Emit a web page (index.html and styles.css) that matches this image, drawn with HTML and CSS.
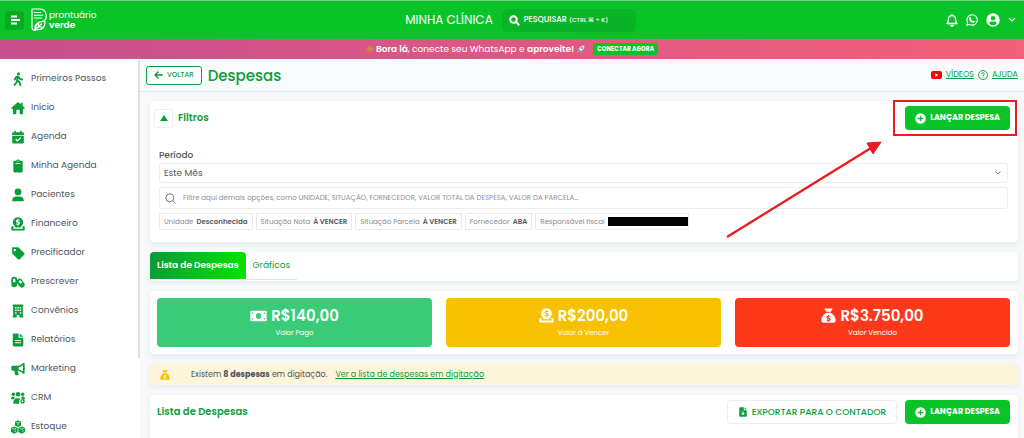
FILE: index.html
```html
<!DOCTYPE html>
<html lang="pt-BR">
<head>
<meta charset="UTF-8">
<meta name="viewport" content="width=device-width, initial-scale=1">
<title>Despesas - Prontuário Verde</title>
<link rel="stylesheet" href="styles.css">
</head>
<body>
<!-- Ícones -->
<svg class="sprite" aria-hidden="true">
  <symbol id="i-walk" viewBox="0 0 24 24"><circle cx="13" cy="3" r="2.6"/><path d="M12.500 8 10.500 14l4 3 1.500 5.500M10.500 14.500 9.500 18 6 22M12 7.500 8 9.500 6.500 13M13 8l2 3.500 4 1.500" fill="none" stroke="currentColor" stroke-width="3.200" stroke-linecap="round" stroke-linejoin="round"/></symbol>
  <symbol id="i-home" viewBox="0 0 24 24"><path d="M12 1.500 0.600 11.500c-.8.8-.3 1.800.7 1.800h2V21c0 1 .6 1.600 1.600 1.600h4.200V16.500c0-.8.5-1.300 1.300-1.300h3.200c.8 0 1.300.5 1.300 1.300v6.100h4.200c1 0 1.600-.6 1.600-1.600v-7.700h2c1 0 1.500-1 .7-1.800L20 8.300V3h-3v2.700z"/></symbol>
  <symbol id="i-calendar" viewBox="0 0 24 24"><path d="M7 1c.8 0 1.300.5 1.300 1.300V4h7.400V2.300a1.300 1.300 0 0 1 2.600 0V4H20c1.200 0 2 .8 2 2v2.500H2V6c0-1.200.8-2 2-2h1.700V2.300C5.700 1.500 6.200 1 7 1zM2 10h20v11c0 1.200-.8 2-2 2H4c-1.200 0-2-.8-2-2zm14 2.300-5 5-2.300-2.300-1.500 1.500 3.800 3.800 6.500-6.500z"/></symbol>
  <symbol id="i-clipboard" viewBox="0 0 24 24"><path fill-rule="evenodd" d="M12 .8A3.200 3.200 0 0 1 15 3h3c1.200 0 2 .8 2 2v16c0 1.200-.8 2-2 2H6c-1.200 0-2-.8-2-2V5c0-1.200.8-2 2-2h3A3.200 3.200 0 0 1 12 .8zM12 3a1 1 0 1 0 0 2 1 1 0 0 0 0-2zM8 7v1.500h8V7z"/></symbol>
  <symbol id="i-user" viewBox="0 0 24 24"><circle cx="12" cy="6.800" r="5.800"/><path d="M2 22.700c-.2-5 2.500-8.200 7-8.200h6c4.500 0 7.200 3.200 7 8.200z"/></symbol>
  <symbol id="i-deposit" viewBox="0 0 24 24"><path d="M3.500 16H2c-1 0-1.600.7-1.600 1.600v3.800c0 1 .7 1.600 1.600 1.600h20c1 0 1.600-.7 1.600-1.600v-3.800c0-1-.7-1.600-1.600-1.600h-1.500l-2 2h1.700v2H3.800v-2h1.700z"/><path fill-rule="evenodd" d="M12 .5a8.700 8.700 0 0 1 6.300 14.700L16 18H8l-2.300-2.800A8.700 8.700 0 0 1 12 .5zM11.200 3v1.300C7.500 5 8.200 9 11 9.700c2.300.6 2.300 1.800.8 1.800-1 0-1.700-.3-2.500-.8l-.8 1.700c.8.5 1.700.8 2.700.9V15h1.700v-1.700c3.500-.7 3.400-4.600.3-5.400-2.400-.6-2.300-1.700-1-1.700.8 0 1.500.2 2.200.5l.7-1.600c-.6-.4-1.400-.6-2.200-.7V3z"/></symbol>
  <symbol id="i-tag" viewBox="0 0 24 24"><path fill-rule="evenodd" d="M2 2h9.500c.8 0 1.500.3 2 .8l9 9c1 1 1 2.300 0 3.300l-7.400 7.400c-1 1-2.300 1-3.300 0l-9-9c-.5-.5-.8-1.200-.8-2zm4.500 3a2 2 0 1 0 0 4 2 2 0 0 0 0-4z"/></symbol>
  <symbol id="i-pills" viewBox="0 0 24 24"><path fill-rule="evenodd" d="M5.500 3a5 5 0 0 1 5 5v.5l.8-.9a5 5 0 0 1 7.400.8l4 5.600a5 5 0 0 1-8.100 5.800l-4.100-5.700V16a5 5 0 0 1-10 0V8a5 5 0 0 1 5-5zm-2 5v4.500h4V8a2 2 0 0 0-4 0zm10.200 4.200 2.300 3.100 3.400-2.400-2.400-3.200a2.100 2.100 0 0 0-3.300 2.500z"/></symbol>
  <symbol id="i-building" viewBox="0 0 24 24"><path fill-rule="evenodd" d="M4 1h16c.8 0 1.200.5 1.200 1.200v1c0 .5-.4.800-.9.800v17h.9v2h-7v-4H9.800v4h-7v-2h.9V4c-.5 0-.9-.3-.9-.8v-1C2.800 1.500 3.200 1 4 1zm3 4v2.500h2.500V5zm4 0v2.500h2.500V5zm4 0v2.500h2.500V5zM7 9.500V12h2.500V9.500zm4 0V12h2.500V9.500zm4 0V12h2.500V9.500zM7 14v2.500h2.500V14zm8 0v2.500h2.500V14z"/></symbol>
  <symbol id="i-file" viewBox="0 0 24 24"><path fill-rule="evenodd" d="M5 1h8v7h8v13c0 1.200-.8 2-2 2H5c-1.200 0-2-.8-2-2V3c0-1.200.8-2 2-2zm10 0 6 5.500h-6zM7 12v1.600h10V12zm0 4v1.600h10V16z"/></symbol>
  <symbol id="i-horn" viewBox="0 0 24 24"><path fill-rule="evenodd" d="M22 1.500c.8 0 1.300.6 1.300 1.400v6c1.100.6 1.100 3 0 3.700V19c0 1.100-1.200 1.700-2.100 1l-3.200-2.500c-2-1.500-4-2.300-6.500-2.500-.2 2.200.2 3.700 1.500 5.300.8 1 .1 2.400-1.100 2.400H8.500c-.5 0-1-.3-1.200-.8C6.200 19.800 5.800 17.500 6 15H3c-1.400 0-2.400-1-2.400-2.400V9C.6 7.600 1.600 6.500 3 6.500h7.500c3 0 5.400-1 7.500-2.600l3.200-2zM20.500 5.700c-2.200 1.700-4.600 2.800-7.500 3.200v3.800c2.900.4 5.300 1.400 7.500 3.200z"/></symbol>
  <symbol id="i-crm" viewBox="0 0 24 24"><circle cx="4" cy="5.500" r="2.900"/><circle cx="12" cy="5.500" r="3.900"/><circle cx="20" cy="5.500" r="2.900"/><path d="M0 14c0-3 1.300-4.700 3.500-4.700 1.500 0 2.500.4 3.200 1.500L5 14zM17.300 11c.7-1.100 1.700-1.700 3.200-1.700 2.200 0 3.500 1.700 3.500 4.700h-5zM4 22c-.2-5 1.500-9.500 6-9.500h3c1.500 0 2.500.3 3.300 1.200-2.500 1.800-3.500 5-1.800 8.300z"/><path fill-rule="evenodd" d="m18.500 13.500.5 1.300 1.300-.2 1.100-1 1.300.8-.2 1.400.8 1h1v1.700h-1l-.7 1.200.3 1.400-1.400.8-1-1h-1.400l-1 1-1.400-.8.3-1.400-.7-1.200h-1v-1.700h1l.8-1-.3-1.400zM19.500 16a1.600 1.600 0 1 0 0 3.200 1.600 1.600 0 0 0 0-3.200z"/></symbol>
  <symbol id="i-boxes" viewBox="0 0 24 24"><path d="M12 .5 17.200 3v6.500L12 12 6.800 9.500V3zM5.700 11l5.700 2.500v7.200l-5.700 2.800L0 20.700v-7.200zM18.300 11l5.700 2.500v7.200l-5.700 2.800-5.700-2.800v-7.200z"/><path d="m9 4 3 1.500L15 4M12 9V7M2.700 14.500l3 1.500 3-1.500M7.500 20.500v-2.500M15.300 14.500l3 1.500 3-1.500M20.500 20v-2" fill="none" stroke="#fff" stroke-width="1.300"/></symbol>
  <symbol id="i-plus" viewBox="0 0 24 24"><path fill-rule="evenodd" d="M12 .5a11.500 11.500 0 1 0 0 23 11.500 11.500 0 0 0 0-23zM10.500 6h3v4.500H18v3h-4.500V18h-3v-4.500H6v-3h4.500z"/></symbol>
  <symbol id="i-bag" viewBox="0 0 24 24"><path fill-rule="evenodd" d="M6.500.6h11c.8 0 1.100.7.700 1.300L15.500 6h-7L5.800 1.900C5.400 1.300 5.700.6 6.500.6zM8.500 7.500h7C20 10 23.500 15 23.500 19c0 3-1.500 4.500-4.500 4.500H5C2 23.500.5 22 .5 19 .5 15 4 10 8.500 7.500zM11.200 11v1.200c-3.600.6-3.300 4.200-.4 5 2.300.6 2.100 1.600.9 1.600-.9 0-1.600-.3-2.300-.7l-.8 1.600c.7.5 1.600.8 2.600.9V22h1.600v-1.400c3.400-.6 3.500-4.400.3-5.200-2.200-.6-2-1.500-.9-1.500.7 0 1.400.2 2 .5l.7-1.500c-.6-.4-1.300-.6-2.100-.7V11z"/></symbol>
  <symbol id="i-money" viewBox="0 0 26 18"><path fill-rule="evenodd" d="M2 1h22c.8 0 1.500.7 1.500 1.500v13c0 .8-.7 1.500-1.500 1.500H2C1.200 17 .5 16.300.5 15.500v-13C.5 1.700 1.200 1 2 1zm11 3.500a4 4.500 0 1 0 0 9 4 4.500 0 0 0 0-9zM3 3.500v2.300A2.300 2.300 0 0 0 5.300 3.500zm20 0h-2.300A2.300 2.300 0 0 0 23 5.800zm-20 8.700v2.300h2.300A2.300 2.300 0 0 0 3 12.200zm20 0a2.300 2.300 0 0 0-2.300 2.300H23z"/></symbol>
  <symbol id="i-export" viewBox="0 0 24 24"><path fill-rule="evenodd" d="M5 .5h9v7h7V21.500c0 1.200-.8 2-2 2H5c-1.200 0-2-.8-2-2v-19c0-1.200.8-2 2-2zm11 0 5 5h-5zM10.800 10v5H7.500l4.500 5 4.500-5h-3.300v-5z"/></symbol>
</svg>

<header class="topbar">
  <div class="topbar-left">
    <button class="menu-btn" type="button" aria-label="Menu">
      <svg width="10" height="10" viewBox="0 0 10 10"><path d="M1 1.500h6M1 5h9M1 8.500h6" stroke="currentColor" stroke-width="2"/></svg>
    </button>
    <a class="logo" href="#">
      <svg width="16" height="24" viewBox="0 0 16 24" fill="none" stroke="currentColor" stroke-width="1.200" stroke-linecap="round" stroke-linejoin="round">
        <path d="M1 1h7.500c8 0 8.500 10 3.500 12.500C5 14.500 3 17.500 4.200 22.500M1 1v18c0 2 1.500 3.500 3.200 3.500M3.500 4.500h6M3.500 7.300h8M3.500 10h7M4.500 21.500c6 1 9.500-1.500 9.500-8-6-.5-9 1.500-9.500 8zM4.500 21.500l6-5.500M7.500 15.500v3.500h3.500"/>
      </svg>
      <span class="logo-text"><span>prontuário</span><b>verde</b></span>
    </a>
  </div>
  <div class="topbar-center">
    <span class="clinic">MINHA CLÍNICA</span>
    <button class="search-btn" type="button">
      <svg width="11" height="11" viewBox="0 0 11 11" fill="none" stroke="currentColor" stroke-width="2"><circle cx="4.500" cy="4.500" r="3.300"/><path d="m7 7 3.300 3.300"/></svg>
      <span>PESQUISAR <small>(CTRL ⌘ + K)</small></span>
    </button>
  </div>
  <div class="topbar-right">
    <button type="button" aria-label="Notificações">
      <svg width="12" height="14" viewBox="0 0 12 14" fill="none" stroke="currentColor" stroke-width="1.300" stroke-linejoin="round"><path d="M6 1v1M1 10.500c1.500-1.500 1.500-2.500 1.500-4.500a3.500 3.500 0 0 1 7 0c0 2 0 3 1.500 4.500z"/><path d="M4.500 12.300c.6 1.200 2.400 1.200 3 0z" fill="currentColor"/></svg>
    </button>
    <button type="button" aria-label="WhatsApp">
      <svg width="12" height="12" viewBox="0 0 24 24"><path fill="none" stroke="currentColor" stroke-width="2.200" d="M1.700 22.300 3.300 17A10.300 10.300 0 1 1 7 20.800z"/><path fill="currentColor" d="M8.300 6c.6-.2 1 0 1.200.5l.9 2c.2.500-.2 1-.9 1.800 1 2 2.300 3.200 4.400 4.100.6-.8 1-1.400 1.500-1.200l2.100 1c.5.3.4.7.2 1.400-.6 1.500-2.200 2.200-3.800 1.800-4-1-6.700-3.700-7.800-6.900-.4-1.800.6-4 2.200-4.500z"/></svg>
    </button>
    <button class="account" type="button" aria-label="Minha conta">
      <svg width="14" height="14" viewBox="0 0 24 24"><path fill="currentColor" fill-rule="evenodd" d="M12 .5a11.500 11.500 0 1 0 0 23 11.500 11.500 0 0 0 0-23zM12 5a4 4 0 1 1 0 8 4 4 0 0 1 0-8zM5.500 18c.5-2.500 2-3.500 4-3.500h5c2 0 3.500 1 4 3.500-3 3.500-10 3.500-13 0z"/></svg>
      <svg width="8" height="6" viewBox="0 0 8 6" fill="none" stroke="currentColor" stroke-width="1.200"><path d="m1 1 3 3 3-3"/></svg>
    </button>
  </div>
</header>

<div class="promo">
  <span class="promo-text">
    <svg width="8" height="8" viewBox="0 0 8 8" stroke="#c98a4b" stroke-width="1"><path d="M4 0v8M0 4h8M1 1l6 6M7 1 1 7"/><circle cx="4" cy="4" r="2" fill="#c98a4b"/></svg>
    <span><b>Bora lá</b>, conecte seu WhatsApp e <b>aproveite!</b></span>
    <svg width="9" height="9" viewBox="0 0 9 9"><path d="M8.500.5C6 .5 4 1.500 2.800 4L5 6.200C7.500 5 8.500 3 8.500.5z" fill="#dfe7f2"/><circle cx="6" cy="3" r="1" fill="#4b86c9"/><path d="M3.300 3 1 3.500.5 5l2-.3zM6 5.700 5.500 8 4 8.500l.3-2z" fill="#8299c4"/><path d="M2.500 5.500.8 8.200 3.500 6.500z" fill="#f2a541"/></svg>
  </span>
  <button class="promo-btn" type="button">CONECTAR AGORA</button>
</div>

<div class="layout">
  <nav class="sidebar">
    <a href="#"><svg><use href="#i-walk"/></svg>Primeiros Passos</a>
    <a href="#"><svg><use href="#i-home"/></svg>Início</a>
    <a href="#"><svg><use href="#i-calendar"/></svg>Agenda</a>
    <a href="#"><svg><use href="#i-clipboard"/></svg>Minha Agenda</a>
    <a href="#"><svg><use href="#i-user"/></svg>Pacientes</a>
    <a href="#"><svg><use href="#i-deposit"/></svg>Financeiro</a>
    <a href="#"><svg><use href="#i-tag"/></svg>Precificador</a>
    <a href="#"><svg><use href="#i-pills"/></svg>Prescrever</a>
    <a href="#"><svg><use href="#i-building"/></svg>Convênios</a>
    <a href="#"><svg><use href="#i-file"/></svg>Relatórios</a>
    <a href="#"><svg><use href="#i-horn"/></svg>Marketing</a>
    <a href="#"><svg><use href="#i-crm"/></svg>CRM</a>
    <a href="#"><svg><use href="#i-boxes"/></svg>Estoque</a>
    <span class="scroll-thumb"></span>
  </nav>

  <main class="main">
    <div class="page-head">
      <button class="btn-back" type="button">
        <svg width="9" height="8" viewBox="0 0 9 8" fill="none" stroke="currentColor" stroke-width="1.400" stroke-linecap="round" stroke-linejoin="round"><path d="M8.300 4H1M4 1 1 4l3 3"/></svg>
        VOLTAR
      </button>
      <h1>Despesas</h1>
      <div class="help-links">
        <svg width="11" height="8" viewBox="0 0 11 8"><rect width="11" height="8" rx="2" fill="#f00"/><path d="M4.300 2.200v3.600L7.400 4z" fill="#fff"/></svg>
        <a href="#">VÍDEOS</a>
        <svg width="10" height="10" viewBox="0 0 20 20" fill="none" stroke="#0a9e3b" stroke-width="1.800"><circle cx="10" cy="10" r="9"/><path d="M7.500 8c0-3.500 5.200-3.300 5.200-.3C12.700 9.500 10 9.700 10 12M10 13.500v2"/></svg>
        <a href="#">AJUDA</a>
      </div>
    </div>

    <div class="content">
      <section class="card filters">
        <div class="filters-head">
          <button class="toggle" type="button" aria-label="Recolher filtros"><svg width="8" height="6" viewBox="0 0 8 6"><path d="M4 0 8 6H0z" fill="currentColor"/></svg></button>
          <h2>Filtros</h2>
          <div class="launch">
            <button class="btn-primary" type="button"><svg><use href="#i-plus"/></svg>LANÇAR DESPESA</button>
            <svg class="arrow" width="160" height="100" viewBox="0 0 160 100"><path d="M3 97 147 8" stroke="#e91c1f" stroke-width="2.400" fill="none"/><path d="m157 2-8 12-6-11z" fill="#e91c1f" stroke="#e91c1f"/></svg>
          </div>
        </div>
        <div class="filters-body">
          <label for="periodo">Período</label>
          <div class="select-wrap">
            <select id="periodo"><option>Este Mês</option></select>
            <svg width="6" height="4" viewBox="0 0 6 4" fill="none" stroke="#7b8087"><path d="m.5.5 2.500 2.500L5.500.5"/></svg>
          </div>
          <div class="search-box">
            <svg width="11" height="11" viewBox="0 0 11 11" fill="none" stroke="#6f757c"><circle cx="4.800" cy="4.800" r="4"/><path d="m7.800 7.800 2.700 2.700"/></svg>
            <input type="text" aria-label="Filtrar despesas" placeholder="Filtre aqui demais opções, como UNIDADE, SITUAÇÃO, FORNECEDOR, VALOR TOTAL DA DESPESA, VALOR DA PARCELA...">
          </div>
          <div class="tags">
            <span class="tag">Unidade <b>Desconhecida</b></span>
            <span class="tag">Situação Nota <b>À VENCER</b></span>
            <span class="tag">Situação Parcela <b>À VENCER</b></span>
            <span class="tag">Fornecedor <b>ABA</b></span>
            <span class="tag tag-hidden">Responsável fiscal <i class="redacted"></i></span>
          </div>
        </div>
      </section>

      <div class="card tabs">
        <button class="tab active" type="button">Lista de Despesas</button>
        <button class="tab" type="button">Gráficos</button>
      </div>

      <section class="card totals">
        <div class="total paid">
          <strong><svg class="wide"><use href="#i-money"/></svg>R$140,00</strong>
          <span>Valor Pago</span>
        </div>
        <div class="total due">
          <strong><svg><use href="#i-deposit"/></svg>R$200,00</strong>
          <span>Valor à Vencer</span>
        </div>
        <div class="total overdue">
          <strong><svg><use href="#i-bag"/></svg>R$3.750,00</strong>
          <span>Valor Vencido</span>
        </div>
      </section>

      <div class="card notice">
        <svg><use href="#i-bag"/></svg>
        <span>Existem <b>8 despesas</b> em digitação.</span>
        <a href="#">Ver a lista de despesas em digitação</a>
      </div>

      <section class="card list-card">
        <h2>Lista de Despesas</h2>
        <button class="btn-light" type="button"><svg><use href="#i-export"/></svg>EXPORTAR PARA O CONTADOR</button>
        <button class="btn-primary" type="button"><svg><use href="#i-plus"/></svg>LANÇAR DESPESA</button>
      </section>
    </div>
  </main>
</div>
</body>
</html>
```
FILE: styles.css
```css
* {
  box-sizing: border-box;
}

body {
  margin: 0;
  height: 100vh;
  display: flex;
  flex-direction: column;
  overflow: hidden;
  font-family: Poppins, Inter, "Noto Sans", sans-serif;
  font-size: 9px;
  color: #50565e;
  background: #f7f9fb;
}

button, input, select {
  font: inherit;
  color: inherit;
  margin: 0;
  padding: 0;
  border: 0;
  background: none;
}

button {
  display: flex;
  align-items: center;
  justify-content: center;
  white-space: nowrap;
  cursor: pointer;
}

svg {
  display: block;
  flex: none;
}

symbol, use {
  fill: currentColor;
}

.sprite {
  position: absolute;
  width: 0;
  height: 0;
}

/* Barra superior */
.topbar {
  flex: none;
  height: 39px;
  display: grid;
  grid-template-columns: 1fr auto 1fr;
  align-items: center;
  padding: 0 8px 0 5px;
  border-top: 1px solid #74cf87;
  background: #09c428;
  color: #fff;
}

.topbar-left,
.topbar-center,
.topbar-right,
.logo,
.account {
  display: flex;
  align-items: center;
}

.topbar-left {
  gap: 7px;
}

.menu-btn {
  width: 19px;
  height: 19px;
  border-radius: 4px;
  background: #08a925;
}

.logo {
  gap: 2px;
  color: #fff;
  text-decoration: none;
}

.logo-text {
  display: flex;
  flex-direction: column;
  font-size: 9px;
  line-height: 10px;
}

.logo-text b {
  font-weight: 600;
}

.topbar-center {
  gap: 9px;
  margin-left: 20px;
}

.clinic {
  font-size: 12px;
}

.search-btn {
  width: 134px;
  height: 23px;
  justify-content: flex-start;
  gap: 4px;
  padding: 0 7px;
  border-radius: 5px;
  background: #09b527;
  font-size: 8px;
  font-weight: 500;
}

.search-btn small {
  font-size: 6px;
}

.topbar-right {
  justify-content: flex-end;
  gap: 8px;
}

.account {
  gap: 8px;
}

/* Faixa promocional */
.promo {
  flex: none;
  height: 20px;
  display: flex;
  align-items: center;
  justify-content: center;
  gap: 8px;
  color: #fff;
  background: linear-gradient(90deg, #c84f8d, #f46079);
}

.promo-text {
  display: flex;
  align-items: center;
  gap: 2px;
}

.promo-text b {
  font-weight: 600;
}

.promo-btn {
  height: 12px;
  padding: 0 4px;
  border-radius: 3px;
  background: #09c428;
  font-size: 6px;
  font-weight: 700;
}

.layout {
  flex: 1;
  display: flex;
  min-height: 0;
}

/* Menu lateral */
.sidebar {
  position: relative;
  flex: none;
  width: 140px;
  padding: 5px 0 0 11px;
  overflow: hidden;
  background: #fff;
}

.sidebar a {
  height: 29px;
  display: flex;
  align-items: center;
  gap: 6px;
  color: #50565e;
  text-decoration: none;
}

.sidebar svg {
  width: 14px;
  height: 14px;
  color: #0a9e3b;
}

.scroll-thumb {
  position: absolute;
  top: 1px;
  right: 0;
  width: 2px;
  height: 298px;
  background: #dfe2e4;
}

.main {
  flex: 1;
  min-width: 0;
}

.page-head {
  height: 33px;
  display: flex;
  align-items: center;
  gap: 6px;
  padding: 0 6px;
  border-bottom: 1px solid #e4e7ea;
  background: #f9fafb;
}

.btn-back {
  height: 19px;
  gap: 4px;
  padding: 0 7px;
  border: 1px solid #0a9e3b;
  border-radius: 3px;
  background: #fff;
  color: #0a9e3b;
  font-size: 7px;
  font-weight: 500;
}

h1 {
  margin: 0;
  color: #0a9e3b;
  font-size: 15px;
  font-weight: 500;
}

.help-links {
  margin-left: auto;
  display: flex;
  align-items: center;
  gap: 4px;
  font-size: 8px;
}

.help-links a,
.notice a {
  color: #0a9e3b;
}

/* Conteúdo */
.content {
  display: flex;
  flex-direction: column;
  gap: 10px;
  padding: 9px 6px 0 10px;
}

.card {
  border-radius: 4px;
  background: #fff;
  box-shadow: 0 2px 6px rgba(40, 50, 70, 0.08);
}

h2 {
  margin: 0;
  color: #0a9e3b;
  font-size: 10px;
  font-weight: 600;
}

.filters {
  height: 141px;
}

.filters-head {
  display: flex;
  align-items: center;
  gap: 5px;
  padding: 5px 8px 0 4px;
}

.toggle {
  width: 19px;
  height: 19px;
  border: 1px solid #eceef0;
  border-radius: 3px;
  color: #0a9e3b;
}

.launch {
  position: relative;
  margin-left: auto;
}

/* Marcação em volta do botão */
.launch::after {
  content: "";
  position: absolute;
  inset: -6px -7px -6px -12px;
  border: 2px solid #e91c1f;
}

.arrow {
  position: absolute;
  right: 126px;
  top: 34px;
}

.btn-primary,
.btn-light {
  height: 24px;
  gap: 4px;
  padding: 0 10px;
  border-radius: 4px;
  font-size: 9px;
}

.btn-primary {
  background: #09c428;
  color: #fff;
  font-size: 8px;
  font-weight: 700;
}

.btn-light svg,
.notice svg {
  width: 10px;
  height: 10px;
}

.btn-primary svg {
  width: 11px;
  height: 11px;
}

.filters-body {
  padding: 19px 10px 0 9px;
}

.filters-body label {
  display: block;
  height: 14px;
  line-height: 12px;
  font-weight: 500;
}

.select-wrap,
.search-box {
  display: flex;
  align-items: center;
  border: 1px solid #eceef0;
  border-radius: 3px;
}

.select-wrap {
  height: 20px;
  padding-right: 6px;
}

.select-wrap select {
  flex: 1;
  height: 18px;
  padding-left: 4px;
  appearance: none;
}

.search-box {
  height: 22px;
  margin-top: 4px;
  padding-left: 5px;
  gap: 7px;
}

.search-box input {
  flex: 1;
  font-size: 7px;
}

.search-box input::placeholder {
  color: #8b9096;
  opacity: 1;
}

.tags {
  display: flex;
  gap: 3px;
  margin-top: 4px;
}

.tag {
  height: 17px;
  display: flex;
  align-items: center;
  gap: 3px;
  padding: 0 4px;
  border: 1px solid #e8eaed;
  font-size: 7px;
  white-space: nowrap;
  color: #868b92;
}

.tag b {
  font-weight: 600;
  color: #50565e;
}

.tag-hidden {
  padding-right: 0;
}

.redacted {
  width: 80px;
  height: 9px;
  background: #000;
}

.tabs {
  display: flex;
  height: 29px;
}

.tab {
  height: 28px;
  padding: 0 7px;
  border-bottom: 1px solid #dfe2e6;
  color: #0a9e3b;
  font-size: 9px;
}

.tab.active {
  height: 27px;
  border: 0;
  border-radius: 4px 4px 0 0;
  background: linear-gradient(100deg, #0a9a3c, #05e300);
  color: #fff;
  font-weight: 600;
}

.totals {
  display: grid;
  grid-template-columns: repeat(3, 1fr);
  gap: 14px;
  padding: 7px 8px 7px 7px;
}

.total {
  height: 49px;
  display: flex;
  flex-direction: column;
  align-items: center;
  justify-content: center;
  border-radius: 4px;
  color: #fff;
  font-size: 7px;
}

.total strong {
  display: flex;
  align-items: center;
  gap: 4px;
  font-size: 15px;
  line-height: 20px;
  font-weight: 600;
}

.total span {
  line-height: 14px;
}

.total svg {
  width: 15px;
  height: 15px;
}

.total svg.wide {
  width: 17px;
  height: 12px;
}

.paid {
  background: #39cb78;
}

.due {
  background: #f7c102;
}

.overdue {
  background: #ff371b;
}

.notice {
  height: 21px;
  display: flex;
  align-items: center;
  gap: 8px;
  padding: 0 10px;
  background: #fdf5da;
  font-size: 8px;
}

.notice svg {
  margin-right: 13px;
  color: #f7c102;
}

.list-card {
  display: flex;
  align-items: center;
  gap: 8px;
  height: 60px;
  padding: 5px 8px 31px 7px;
}

.btn-light {
  margin-left: auto;
  border: 1px solid #eceef0;
  background: #fff;
  color: #0a9e3b;
  font-weight: 500;
}
```
